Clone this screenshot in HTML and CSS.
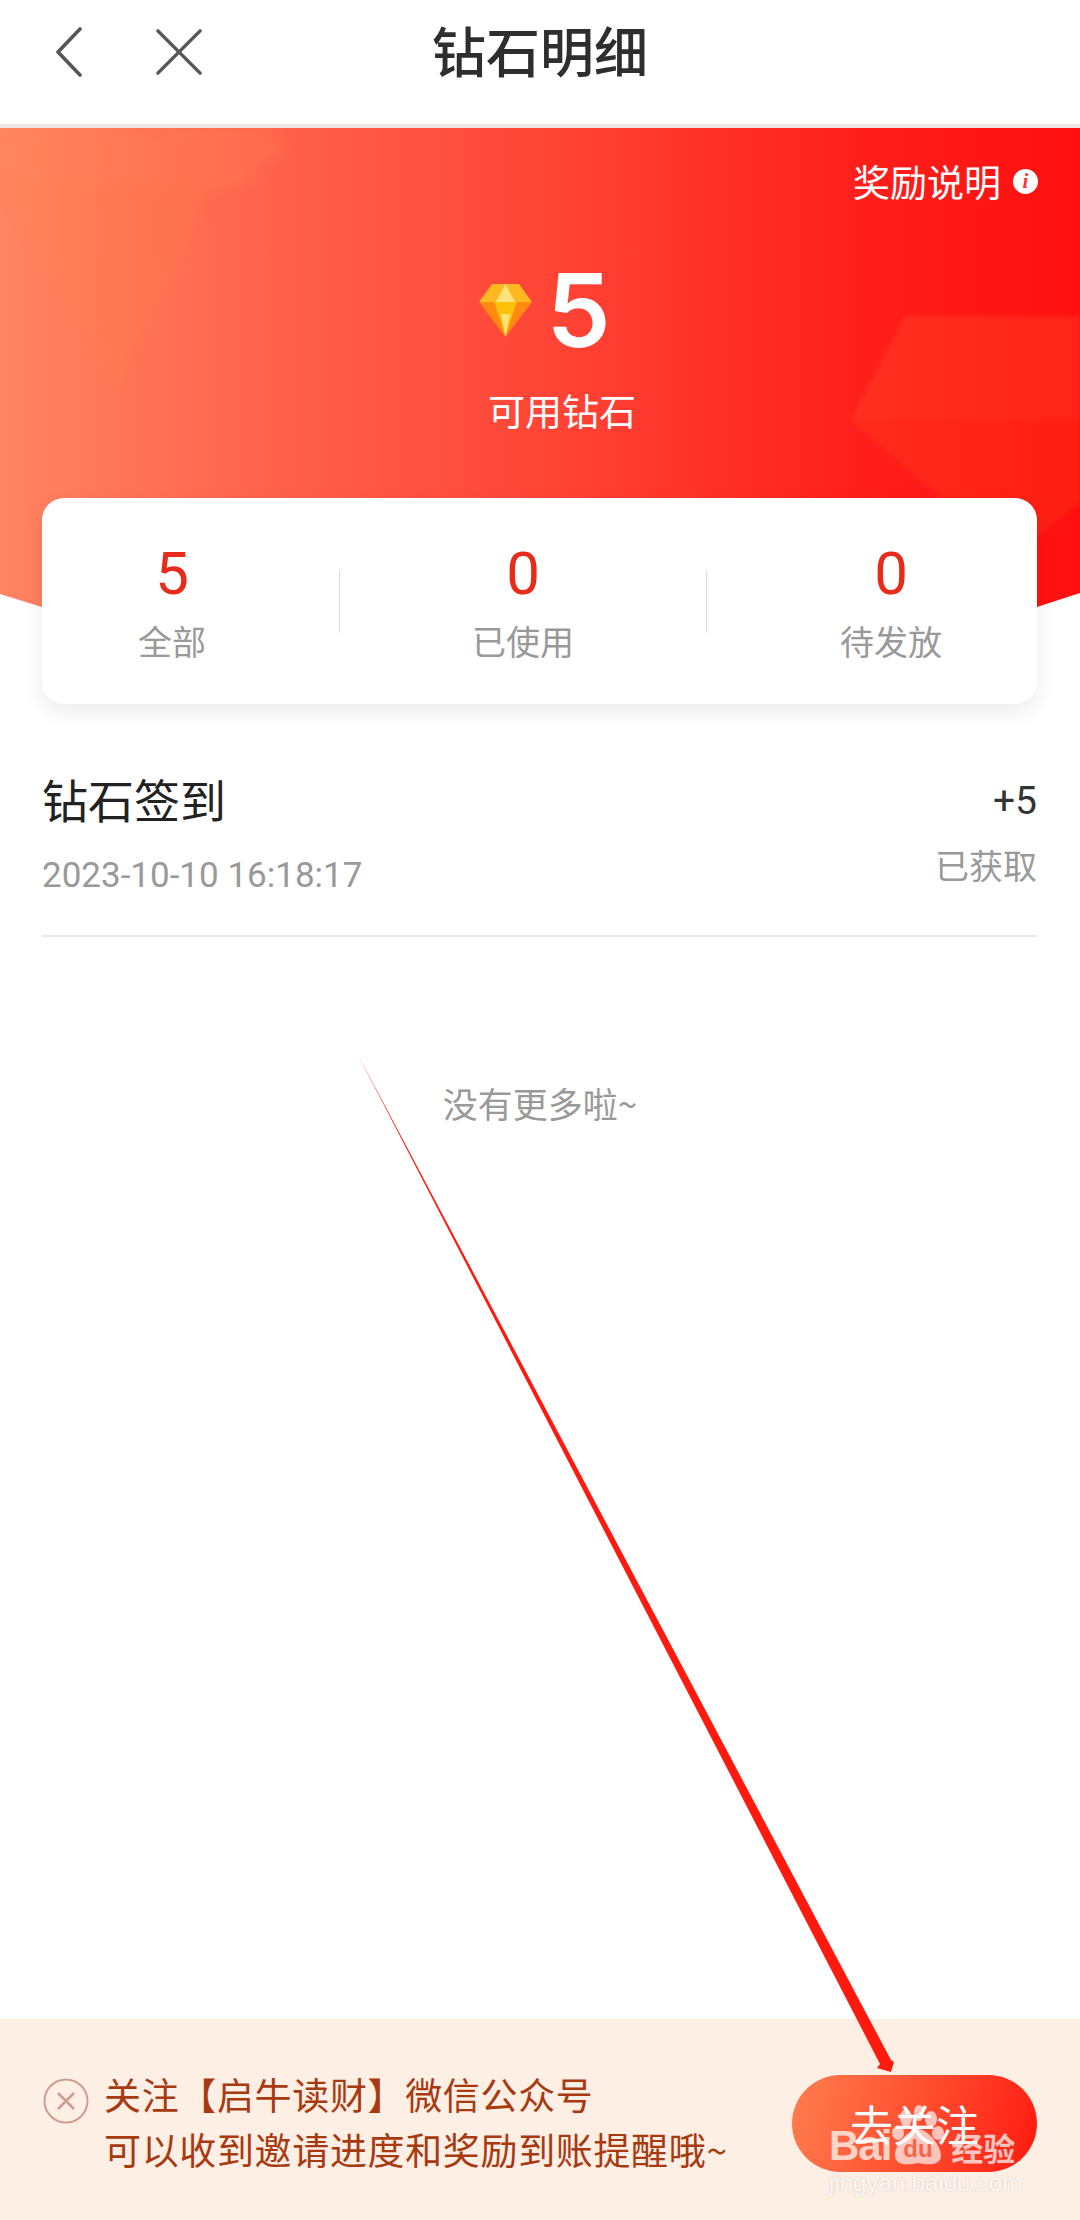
FILE: index.html
```html
<!DOCTYPE html>
<html lang="zh">
<head>
<meta charset="utf-8">
<title>钻石明细</title>
<link rel="stylesheet" href="styles.css">
</head>
<body>
<div class="page">
  <header class="topbar">
    <div class="nav-icons">
      <svg class="icon-back" viewBox="0 0 30 50"><path d="M26 2 L4 25 L26 48" /></svg>
      <svg class="icon-close" viewBox="0 0 50 50"><path d="M3 3 L47 47 M47 3 L3 47" /></svg>
    </div>
    <h1 class="title">钻石明细</h1>
    <div></div>
  </header>
  <div class="rule"></div>

  <section class="hero">
    <svg class="hero-decor" viewBox="0 0 1080 480">
      <polygon class="gem-a" points="0,52 0,60 210,60 115,268"/>
      <polygon class="gem-b" points="0,0 270,0 285,20 240,60 0,60"/>
      <polygon class="gem-c" points="905,188 1080,188 1080,375 1010,430 850,292"/>
      <polygon class="gem-d" points="905,188 1080,188 1080,292 850,292"/>
    </svg>
    <div class="reward-link">
      <span>奖励说明</span>
      <span class="info">i</span>
    </div>
    <div class="amount">
      <svg class="gem" viewBox="0 0 53 53">
        <polygon fill="#ffb820" points="13,0 40,0 53,18 0,18"/>
        <polygon fill="#ffe27a" points="26.5,0 36,18 17,18"/>
        <polygon fill="#ff8a12" points="0,18 15,18 26.5,53"/>
        <polygon fill="#ff8a12" points="53,18 38,18 26.5,53"/>
        <polygon fill="#ffc107" points="15,18 38,18 26.5,53"/>
        <polygon fill="#ffe27a" points="22,30 31,30 26.5,53"/>
      </svg>
      <span class="amount-num">5</span>
    </div>
    <div class="amount-label">可用钻石</div>
  </section>

  <section class="stats">
    <div class="stat stat-first"><div class="stat-num">5</div><div class="stat-label">全部</div></div>
    <div class="stat-sep"></div>
    <div class="stat stat-mid"><div class="stat-num">0</div><div class="stat-label">已使用</div></div>
    <div class="stat-sep"></div>
    <div class="stat stat-last"><div class="stat-num">0</div><div class="stat-label">待发放</div></div>
  </section>

  <section class="record">
    <div class="record-left">
      <div class="record-name">钻石签到</div>
      <div class="record-date">2023-10-10 16:18:17</div>
    </div>
    <div class="record-right">
      <div class="record-delta">+5</div>
      <div class="record-status">已获取</div>
    </div>
  </section>

  <div class="no-more">没有更多啦~</div>

  <footer class="banner">
    <svg class="banner-close" viewBox="0 0 46 46">
      <circle cx="23" cy="23" r="21.5"/>
      <path d="M15 15 L31 31 M31 15 L15 31"/>
    </svg>
    <div class="banner-text">
      <div>关注【启牛读财】微信公众号</div>
      <div>可以收到邀请进度和奖励到账提醒哦~</div>
    </div>
    <button class="follow">去关注</button>
  </footer>

  <svg class="arrow" viewBox="0 0 1080 2220">
    <polygon points="357,1053 891,2060 894,2062 891,2072 877,2068 880,2064"/>
  </svg>

  <div class="watermark">
    <div class="wm-logo">
      <span class="wm-bai">Bai</span>
      <span class="wm-paw">
        <svg viewBox="0 0 54 60">
          <ellipse cx="15" cy="13" rx="6" ry="9"/>
          <ellipse cx="28" cy="8" rx="5" ry="8"/>
          <ellipse cx="40" cy="14" rx="6" ry="8"/>
          <ellipse cx="7" cy="28" rx="6" ry="7"/>
          <ellipse cx="47" cy="28" rx="6" ry="7"/>
          <path d="M27 24 C36 24 50 40 50 50 C50 61 38 60 27 58 C16 60 4 61 4 50 C4 40 18 24 27 24Z"/>
        </svg>
        <span class="wm-du">du</span>
      </span>
      <span class="wm-jy">经验</span>
    </div>
    <div class="wm-url">jingyan.baidu.com</div>
  </div>
</div>
</body>
</html>
```

FILE: styles.css
```css
* { box-sizing: border-box; }
html, body { margin: 0; padding: 0; }
body {
  background: #fff;
  font-family: "Noto Sans CJK SC", "Noto Sans", sans-serif;
  color: #222;
}
.page {
  position: relative;
  width: 1080px;
  height: 2220px;
  overflow: hidden;
  display: flex;
  flex-direction: column;
}

/* top bar */
.topbar {
  height: 124px;
  display: grid;
  grid-template-columns: 1fr auto 1fr;
  padding-bottom: 24px;
  align-items: center;
}
.nav-icons {
  display: flex;
  align-items: center;
  gap: 71px;
  padding-left: 54px;
  margin-top: 3px;
}
.icon-back { width: 30px; height: 50px; }
.icon-close { width: 48px; height: 48px; }
.icon-back path, .icon-close path {
  fill: none;
  stroke: #565656;
  stroke-linecap: round;
  stroke-linejoin: round;
}
.icon-back path { stroke-width: 3.6; }
.icon-close path { stroke-width: 3.6; }
.title {
  margin: 0;
  font-size: 54px;
  line-height: 64px;
  font-weight: 500;
  color: #2e2e2e;
}
.rule { height: 4px; background: #eee6e3; }

/* hero */
.hero {
  position: relative;
  height: 480px;
  flex: none;
  background: linear-gradient(90deg, #ff8462 0%, #ff5c48 30%, #ff4335 52%, #ff1f1a 80%, #ff0f10 100%);
  clip-path: polygon(0 0, 100% 0, 100% 465px, 1037px 479px, 42px 479px, 0 466px);
  color: #fff;
  display: flex;
  flex-direction: column;
  align-items: center;
  padding-top: 28px;
}
.hero-decor {
  position: absolute;
  inset: 0;
  width: 1080px;
  height: 480px;
}
.gem-a { fill: #ff8c3c; opacity: .18; filter: blur(7px); }
.gem-b { fill: #ff8c50; opacity: .22; filter: blur(7px); }
.gem-c { fill: #ff5a1e; opacity: .2; filter: blur(2px); }
.gem-d { fill: #ff6a50; opacity: .08; filter: blur(2px); }
.reward-link {
  position: relative;
  align-self: flex-end;
  display: flex;
  align-items: center;
  gap: 12px;
  padding-right: 42px;
  height: 50px;
  font-size: 37px;
  line-height: 50px;
}
.info {
  width: 25px;
  height: 25px;
  border-radius: 50%;
  background: #fff;
  color: #f33;
  font-family: "Liberation Serif", serif;
  font-style: italic;
  font-weight: 700;
  font-size: 21px;
  line-height: 25px;
  text-align: center;
}
.amount {
  position: relative;
  margin: 54px 0 0 10px;
  height: 100px;
  display: flex;
  align-items: center;
  gap: 14px;
}
.gem { width: 53px; height: 53px; filter: blur(.6px); }
.amount-num {
  font-family: Inter, sans-serif;
  font-weight: 600;
  font-size: 102px;
  line-height: 100px;
}
.amount-label {
  position: relative;
  margin: 25px 0 0 44px;
  font-size: 37px;
  line-height: 50px;
}

/* stats card */
.stats {
  position: relative;
  flex: none;
  width: 995px;
  height: 206px;
  margin: -110px 0 0 42px;
  background: #fff;
  border-radius: 22px;
  box-shadow: 0 8px 22px rgba(0, 0, 0, .08);
  display: flex;
  align-items: flex-start;
  padding-top: 41px;
}
.stat { display: flex; flex-direction: column; align-items: center; }
.stat-first { width: 297px; padding-right: 37px; }
.stat-mid { width: 366px; }
.stat-last { width: 330px; padding-left: 38px; }
.stat-sep { width: 1px; height: 63px; background: #ddd; margin-top: 31px; flex: none; }
.stat-num {
  font-family: Roboto, sans-serif;
  font-size: 60px;
  line-height: 70px;
  color: #e82c1c;
}
.stat-label {
  margin-top: 7px;
  font-size: 34px;
  line-height: 50px;
  color: #999;
}

/* record */
.record {
  flex: none;
  margin: 0 43px 0 42px;
  height: 233px;
  padding-top: 63px;
  border-bottom: 2px solid #e9e9e9;
  display: flex;
  justify-content: space-between;
}
.record-name {
  font-size: 46px;
  line-height: 62px;
  color: #222;
}
.record-date {
  margin-top: 25px;
  font-family: Roboto, sans-serif;
  font-size: 35px;
  line-height: 44px;
  color: #999;
}
.record-right { text-align: right; padding-top: 9px; }
.record-delta {
  font-family: Roboto, sans-serif;
  font-size: 39px;
  line-height: 50px;
  color: #333;
}
.record-status {
  margin-top: 14px;
  font-size: 34px;
  line-height: 50px;
  color: #999;
}

.no-more {
  flex: none;
  margin-top: 141px;
  text-align: center;
  font-size: 35px;
  line-height: 50px;
  color: #999;
}

/* banner */
.banner {
  position: absolute;
  left: 0;
  right: 0;
  bottom: 0;
  height: 201px;
  background: #feefe5;
  display: flex;
  align-items: center;
  padding: 0 43px;
}
.banner-close { width: 46px; height: 46px; flex: none; margin: -38px 15px 0 0; }
.banner-close circle { fill: none; stroke: #cf9d8c; stroke-width: 2; }
.banner-close path { fill: none; stroke: #cf9d8c; stroke-width: 2.5; }
.banner-text {
  flex: 1;
  font-size: 37px;
  line-height: 55px;
  letter-spacing: .65px;
  color: #a83a12;
  margin-top: 4px;
  white-space: nowrap;
}
.follow {
  flex: none;
  width: 245px;
  height: 97px;
  margin-top: 7px;
  border: 0;
  border-radius: 49px;
  background: linear-gradient(105deg, #ff7e50 0%, #ff4a2e 55%, #ff1a0f 100%);
  color: #fff;
  font-family: inherit;
  font-size: 43px;
  padding: 0;
}

/* overlays */
.arrow {
  position: absolute;
  left: 0;
  top: 0;
  width: 1080px;
  height: 2220px;
  pointer-events: none;
}
.arrow polygon { fill: #ff1a10; }
.watermark {
  position: absolute;
  left: 829px;
  top: 2105px;
  width: 195px;
  color: rgba(255, 255, 255, .72);
}
.wm-logo { display: flex; align-items: flex-end; height: 60px; }
.wm-bai {
  font-family: "Liberation Sans", sans-serif;
  font-weight: 700;
  font-size: 42px;
  line-height: 38px;
  letter-spacing: -1px;
}
.wm-paw { position: relative; width: 54px; height: 60px; flex: none; }
.wm-paw svg { position: absolute; inset: 0; width: 54px; height: 60px; }
.wm-paw svg * { fill: rgba(255, 255, 255, .68); }
.wm-du {
  position: absolute;
  left: 12px;
  top: 31px;
  font-family: "Liberation Sans", sans-serif;
  font-weight: 700;
  font-size: 24px;
  line-height: 26px;
  color: #f8654a;
}
.wm-jy {
  margin-left: 6px;
  font-weight: 700;
  font-size: 32px;
  line-height: 36px;
  white-space: nowrap;
}
.wm-url {
  margin-top: 1px;
  font-family: "Liberation Sans", sans-serif;
  font-size: 24px;
  line-height: 34px;
  white-space: nowrap;
  color: rgba(255, 255, 255, .9);
  text-shadow: 0 0 2px rgba(200, 170, 160, .7);
}
```
